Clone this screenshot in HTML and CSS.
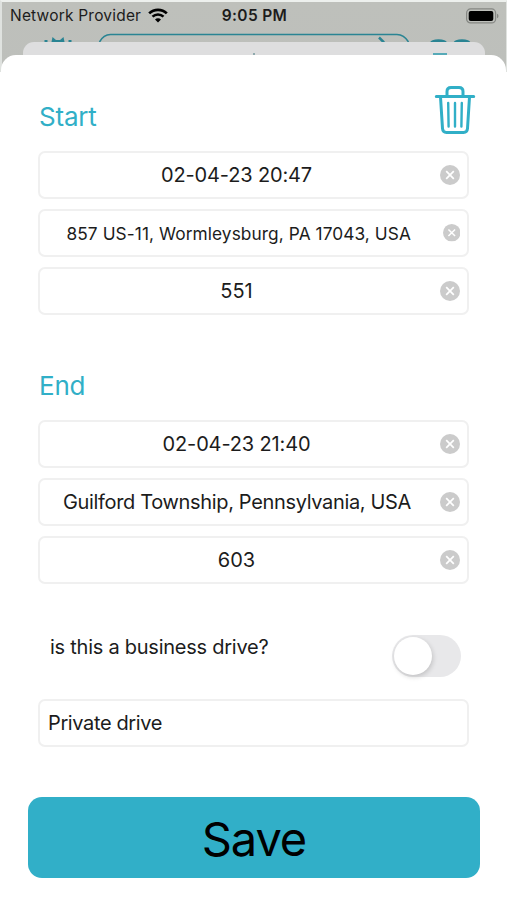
FILE: index.html
```html
<!DOCTYPE html>
<html lang="en">
<head>
<meta charset="UTF-8">
<title>Edit drive</title>
<link rel="stylesheet" href="styles.css">
</head>
<body>
<svg class="symbols" width="0" height="0">
<symbol id="clear" viewBox="0 0 20 20">
<circle cx="10" cy="10" r="10" fill="#cbcbcb"/>
<path d="M6.2 6.2l7.6 7.6M13.8 6.2l-7.6 7.6" stroke="#fff" stroke-width="1.7"/>
</symbol>
</svg>
<div class="backdrop">
<div class="status-bar">
<div class="provider">
<span>Network Provider</span>
<svg width="20" height="15" viewBox="0 0 20 15">
<path d="M1.2 5.4a12.5 12.5 0 0 1 17.6 0" fill="none" stroke="#000" stroke-width="2.7"/>
<path d="M4.5 8.7a7.8 7.8 0 0 1 11 0" fill="none" stroke="#000" stroke-width="2.5"/>
<path d="M7 11.4a4.2 4.2 0 0 1 6 0L10 14.5z"/>
</svg>
</div>
<div class="time">9:05 PM</div>
<svg class="battery" width="33" height="16" viewBox="0 0 33 16">
<rect x=".6" y=".9" width="29" height="14" rx="4" fill="none" stroke="#858783" stroke-width="1.2"/>
<rect x="2.7" y="3" width="24.6" height="10" rx="2" fill="#000"/>
<path d="M31 5.7v4.6q1.5-.6 1.5-2.3T31 5.7z" fill="#858783"/>
</svg>
</div>
<!-- top of the page that is behind the sheets -->
<svg class="peek" width="507" height="12" viewBox="0 0 507 12">
<g fill="none" stroke="#2a8493">
<path d="M99.500 12q4-7.500 11-7.500H397q7 0 11.500 7.500" stroke-width="1.6"/>
<path d="M379 7.500l5 5" stroke-width="2.500"/>
</g>
<g fill="#2a8493">
<path d="M44.500 10h3v2h-3zM68.500 10h3v2h-3zM51.500 12l1-5 3.500 3h4l3.500-3 1 5z"/>
<ellipse cx="438.500" cy="13" rx="8.500" ry="3.800"/>
<ellipse cx="462" cy="13" rx="8.500" ry="3.800"/>
</g>
</svg>
<div class="back-sheet"><i class="dot"></i><i class="dash"></i></div>
</div>
<div class="sheet">
<section class="group">
<div class="group-head">
<h2>Start</h2>
<svg class="trash" width="42" height="50" viewBox="0 0 42 50" fill="none" stroke="#31afc7" stroke-linecap="round" stroke-linejoin="round">
<path d="M2.300 11.500h37.400M13 11V6.500q0-4 4-4h8q4 0 4 4V11" stroke-width="3"/>
<path d="M6.500 12l2 31.500q.3 4 4 4h17q3.700 0 4-4l2-31.500" stroke-width="3"/>
<path d="M14.200 18l.4 23.500M21 18v23.500M27.800 18l-.4 23.500" stroke-width="2.400"/>
</svg>
</div>
<div class="field"><span class="t-date">02-04-23 20:47</span><svg class="clear"><use href="#clear"/></svg></div>
<div class="field small"><span class="t-address">857 US-11, Wormleysburg, PA 17043, USA</span><svg class="clear"><use href="#clear"/></svg></div>
<div class="field"><span>551</span><svg class="clear"><use href="#clear"/></svg></div>
</section>
<section class="group end">
<div class="group-head"><h2>End</h2></div>
<div class="field"><span class="t-date">02-04-23 21:40</span><svg class="clear"><use href="#clear"/></svg></div>
<div class="field"><span class="t-place">Guilford Township, Pennsylvania, USA</span><svg class="clear"><use href="#clear"/></svg></div>
<div class="field"><span>603</span><svg class="clear"><use href="#clear"/></svg></div>
</section>
<div class="business">
<span>is this a business drive?</span>
<div class="switch"><div class="knob"></div></div>
</div>
<div class="field note"><span>Private drive</span></div>
<button class="save">Save</button>
</div>
</body>
</html>
```
FILE: styles.css
```css
* {
    box-sizing: border-box;
}
body {
    margin: 0;
    height: 900px;
    background: #fff;
    color: #1c1c1c;
    font-family: Inter, "Liberation Sans", sans-serif;
    overflow: hidden;
}
svg {
    display: block;
    flex: none;
}
.symbols {
    display: none;
}
.backdrop {
    height: 72px;
    background: linear-gradient(#bec0bb, #bdbfbb);
    border-top: 2px solid #edf0ed;
    border-left: 2px solid #dfe2df;
    border-right: 1px solid #dfe2df;
}
.status-bar {
    height: 28px;
    padding: 0 7px 1px 8px;
    display: grid;
    grid-template-columns: 1fr auto 1fr;
    align-items: center;
}
.provider {
    display: flex;
    align-items: center;
    gap: 7px;
    font-size: 15.5px;
    letter-spacing: 0.2px;
    white-space: nowrap;
}
.time {
    font-size: 15.5px;
    font-weight: 600;
    letter-spacing: 0.35px;
}
.battery {
    justify-self: end;
}
.peek {
    margin-left: -2px;
}
.back-sheet {
    height: 30px;
    margin: 0 21px 0 21px;
    border-radius: 11px 11px 0 0;
    background: #dededf;
    display: flex;
    justify-content: space-between;
    padding: 11px 38px 0 230px;
}
.dot {
    width: 2px;
    height: 2px;
    background: #8fa9ad;
}
.dash {
    width: 14px;
    height: 2px;
    background: #57aab8;
}
.sheet {
    position: relative;
    height: 845px;
    margin: -17px 1px 0 1px;
    padding: 30px 37px 0 37px;
    border-radius: 15px 15px 0 0;
    background: #fff;
}
.group {
    display: flex;
    flex-direction: column;
    gap: 10px;
}
.group-head {
    height: 56px;
    display: flex;
    justify-content: space-between;
}
.group-head h2 {
    margin: 15px 0 0 1px;
    color: #31afc7;
    font-size: 26px;
    line-height: 34px;
    font-weight: 400;
    letter-spacing: -0.2px;
}
.trash {
    margin-right: -7px;
}
.end {
    margin-top: 39px;
}
.field {
    height: 48px;
    border: 2px solid #f0f0f0;
    border-radius: 7px;
    display: flex;
    align-items: center;
    padding-right: 7px;
    font-size: 20px;
    white-space: nowrap;
}
.field span {
    flex: 1;
    text-align: center;
    padding-right: 7px;
}
.field .t-date {
    letter-spacing: -0.15px;
}
.field .t-place {
    letter-spacing: -0.34px;
    padding-right: 6px;
}
.field .t-address {
    letter-spacing: 0.08px;
    padding-right: 5px;
}
.clear {
    width: 20px;
    height: 20px;
}
.small {
    font-size: 17.3px;
}
.small .clear {
    width: 17.5px;
    height: 17.5px;
}
.business {
    height: 115px;
    padding: 51px 8px 0 12px;
    display: flex;
    justify-content: space-between;
    font-size: 20px;
    line-height: 25px;
    letter-spacing: -0.25px;
}
.switch {
    width: 69px;
    height: 42px;
    border-radius: 21px;
    background: #e8e8ea;
    padding: 2px;
}
.knob {
    width: 38px;
    height: 38px;
    border-radius: 50%;
    background: #fff;
    box-shadow: 1px 2px 5px rgba(0,0,0,0.17);
}
.field.note span {
    text-align: left;
    padding-left: 8px;
    letter-spacing: -0.38px;
}
.save {
    display: block;
    width: 452px;
    height: 81px;
    margin: 50px 0 0 -10px;
    padding: 3px 0 0;
    border: none;
    border-radius: 14px;
    background: #31afc8;
    color: #000;
    font-family: inherit;
    font-size: 47px;
    line-height: 78px;
    letter-spacing: -1.1px;
}
```
